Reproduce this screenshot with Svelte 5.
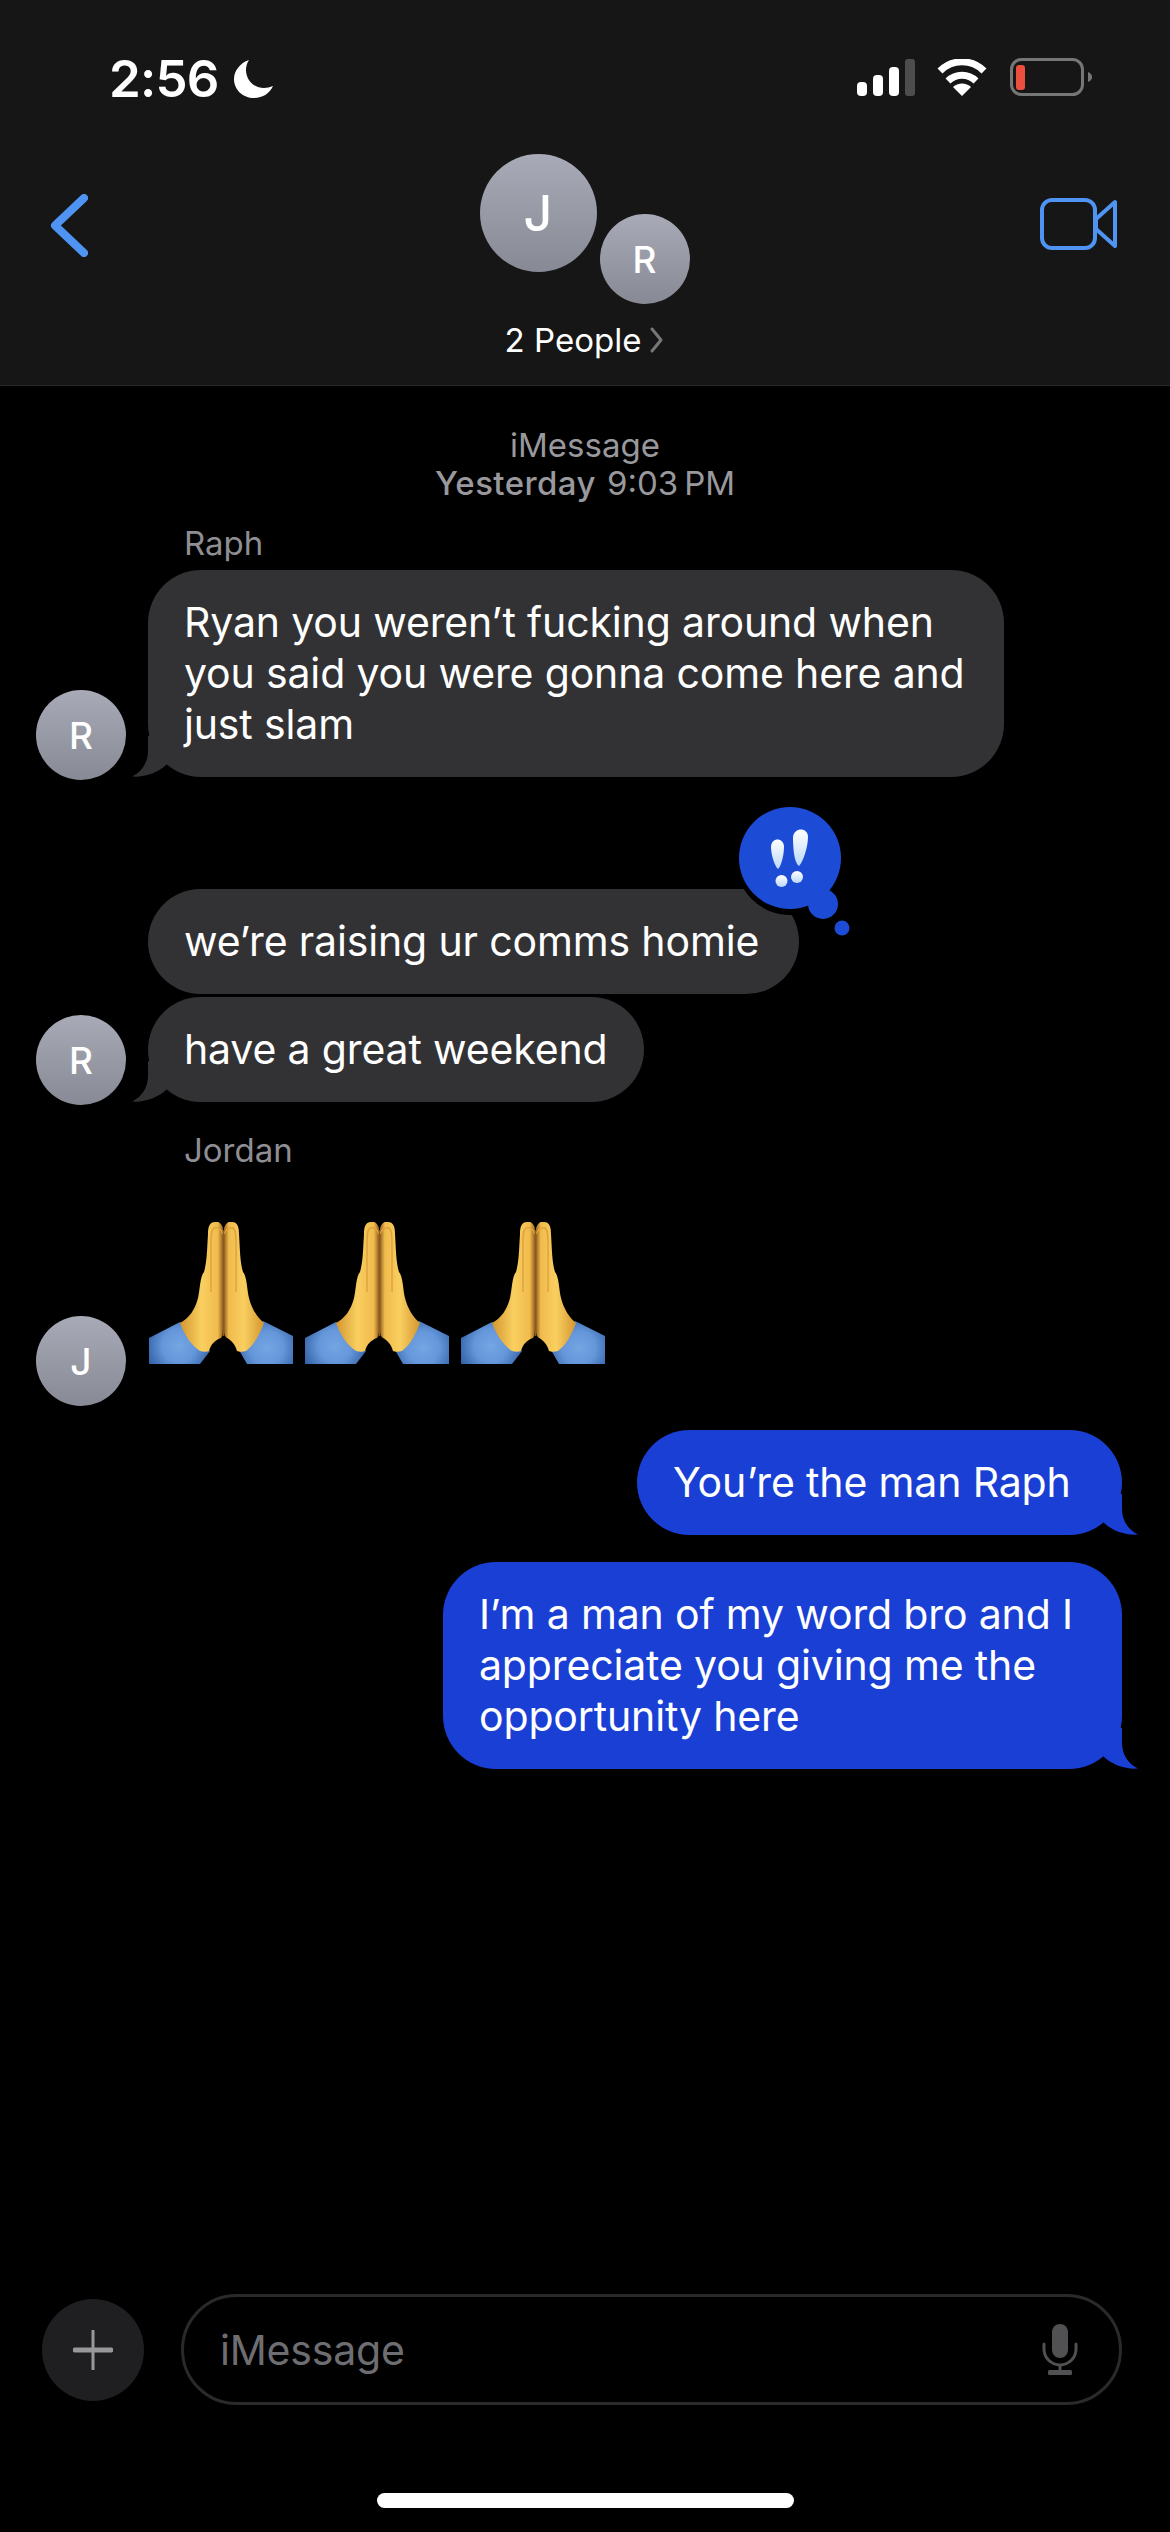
<script>
  const hands = [0, 1, 2];
</script>

{#snippet tail(flip)}
  <svg class="tail" class:flip viewBox="0 0 40 41" width="40" height="41" aria-hidden="true">
    <path d="M22 0 L22 15 C22 26 28 36 38 40.5 C26 41.5 12 37 3 28 L0 0 Z" />
  </svg>
{/snippet}

<div class="phone">
  <header class="top">
    <div class="status">
      <div class="clock">
        <span class="time">2:56</span>
        <svg class="moon" viewBox="0 0 40 40" width="40" height="40" aria-hidden="true">
          <path d="M15 1 C6 4 0 12 0 20 C0 31 9 39 20 39 C29 39 36 34 39 27 C36 28 33 29 30 29 C20 29 12 21 12 11 C12 7 13 4 15 1 Z" fill="#fff" />
        </svg>
      </div>
      <div class="indicators">
        <svg viewBox="0 0 58 37" width="58" height="37" aria-hidden="true">
          <rect x="0" y="23" width="10" height="14" rx="4" fill="#fff" />
          <rect x="16" y="16" width="10" height="21" rx="4" fill="#fff" />
          <rect x="32" y="8" width="10" height="29" rx="4" fill="#fff" />
          <rect x="48" y="0" width="10" height="37" rx="3" fill="#4d4d4d" />
        </svg>
        <svg class="wifi" viewBox="0 0 50 37" width="50" height="37" aria-hidden="true">
          <path d="M25 37 L16 28 A13 13 0 0 1 34 28 Z" fill="#fff" />
          <path d="M11 22 A20 20 0 0 1 39 22" fill="none" stroke="#fff" stroke-width="7" />
          <path d="M3 12 A31 31 0 0 1 47 12" fill="none" stroke="#fff" stroke-width="7" />
        </svg>
        <svg class="battery" viewBox="0 0 82 38" width="82" height="38" aria-hidden="true">
          <rect x="1.5" y="1.5" width="71" height="35" rx="10" fill="none" stroke="#767676" stroke-width="3" />
          <rect x="6" y="7" width="9" height="25" rx="3" fill="#ec4f3e" />
          <path d="M78 14 C81 15 82 17 82 19 C82 21 81 23 78 24 Z" fill="#767676" />
        </svg>
      </div>
    </div>
    <nav class="nav">
      <svg class="back" viewBox="0 0 38 63" width="38" height="63" aria-hidden="true">
        <path d="M34 4 L5 31.5 L34 59" fill="none" stroke="#4f94f2" stroke-width="8" stroke-linecap="round" stroke-linejoin="round" />
      </svg>
      <div class="group">
        <div class="avatars">
          <div class="avatar big">J</div>
          <div class="avatar mid">R</div>
        </div>
        <div class="people">2 People
          <svg viewBox="0 0 15 30" width="15" height="30" aria-hidden="true">
            <path d="M3 4 L12 15 L3 26" fill="none" stroke="#77777a" stroke-width="3" stroke-linecap="round" stroke-linejoin="round" />
          </svg>
        </div>
      </div>
      <svg class="video" viewBox="0 0 78 52" width="78" height="52" aria-hidden="true">
        <rect x="2" y="2" width="53" height="48" rx="10" fill="none" stroke="#4f94f2" stroke-width="4" />
        <path d="M56 21 L75 4 L75 48 L56 31 Z" fill="none" stroke="#4f94f2" stroke-width="4" stroke-linejoin="round" />
      </svg>
    </nav>
  </header>

  <main class="thread">
    <div class="stamp">
      <div>iMessage</div>
      <div><b>Yesterday</b> 9:03&#8201;PM</div>
    </div>

    <div class="name">Raph</div>
    <div class="row">
      <div class="avatar small">R</div>
      <div class="bubble in wide">Ryan you weren’t fucking around when you said you were gonna come here and just slam{@render tail(true)}</div>
    </div>

    <div class="row second">
      <div class="spacer"></div>
      <div class="bubble in homie">we’re raising ur comms homie
        <svg class="reaction" viewBox="0 0 120 130" width="120" height="130" aria-hidden="true">
          <defs>
            <linearGradient id="bang" x1="0" y1="0" x2="0" y2="1">
              <stop offset="0" stop-color="#fff" />
              <stop offset="1" stop-color="#bcd8f8" />
            </linearGradient>
          </defs>
          <circle cx="54" cy="54" r="54" fill="#000" />
          <circle cx="54" cy="51" r="51" fill="#1c4cd6" />
          <circle cx="87" cy="97" r="15" fill="#1c4cd6" />
          <circle cx="106" cy="121" r="7.5" fill="#1c4cd6" />
          <path d="M35 40 C35 30 48 30 48 40 C48 48 45 60 42 62 C39 60 35 48 35 40 Z" fill="url(#bang)" />
          <path d="M57 30 C58 20 72 20 72 30 C72 40 67 55 63 59 C58 56 57 40 57 30 Z" fill="url(#bang)" />
          <circle cx="45.500" cy="74" r="6" fill="url(#bang)" />
          <circle cx="61" cy="70" r="6" fill="url(#bang)" />
        </svg>
      </div>
    </div>
    <div class="row third">
      <div class="avatar small">R</div>
      <div class="bubble in">have a great weekend{@render tail(true)}</div>
    </div>

    <div class="name jordan">Jordan</div>
    <div class="row">
      <div class="avatar small">J</div>
      <div class="emoji">
        {#each hands as i}
          <svg viewBox="0 0 144 142" width="144" height="142" role="img" aria-label="folded hands">
            <defs>
              <radialGradient id={`slA${i}`} gradientUnits="userSpaceOnUse" cx="30" cy="124" r="42">
                <stop offset="0" stop-color="#74a6e4" />
                <stop offset="0.4" stop-color="#6496da" />
                <stop offset="0.75" stop-color="#3a69ad" />
                <stop offset="1" stop-color="#1a3d80" />
              </radialGradient>
              <radialGradient id={`slB${i}`} gradientUnits="userSpaceOnUse" cx="118" cy="126" r="42">
                <stop offset="0" stop-color="#74a6e4" />
                <stop offset="0.4" stop-color="#6496da" />
                <stop offset="0.75" stop-color="#3a69ad" />
                <stop offset="1" stop-color="#1a3d80" />
              </radialGradient>
              <linearGradient id={`skA${i}`} x1="0" y1="0" x2="1" y2="0">
                <stop offset="0" stop-color="#d3962f" />
                <stop offset="0.5" stop-color="#f9cf60" />
                <stop offset="0.88" stop-color="#f0bb4c" />
                <stop offset="1" stop-color="#94601f" />
              </linearGradient>
              <linearGradient id={`skB${i}`} x1="1" y1="0" x2="0" y2="0">
                <stop offset="0" stop-color="#d3962f" />
                <stop offset="0.5" stop-color="#f9cf60" />
                <stop offset="0.88" stop-color="#f0bb4c" />
                <stop offset="1" stop-color="#94601f" />
              </linearGradient>
            </defs>
            <path d="M0 116 L31 100 L61 129 L51 142 L0 142 Z" fill={`url(#slA${i})`} />
            <path d="M144 114 L114 99 L86 121 L98 142 L144 142 Z" fill={`url(#slB${i})`} />
            <path d="M66 0 C60 0 59 6 59 12 C58 28 58 40 55 50 C51 54 51 68 49 76 C46 88 40 96 31 101 C35 112 42 123 51 129 C54 130 58 130 60 129 C62 122 66 118 72 116 C74 114 74 110 74 106 L74 6 C72 0 68 -1 66 0 Z" fill={`url(#skA${i})`} />
            <path d="M83 0 C89 0 90 6 90 12 C91 28 91 40 94 50 C98 54 98 68 100 76 C103 88 109 96 115 101 C111 112 105 123 97 129 C94 130 90 130 88 129 C86 122 82 118 78 116 C75 114 75 110 75 106 L75 6 C77 0 81 -1 83 0 Z" fill={`url(#skB${i})`} />
            <path d="M74 12 C72 6 68 5 65 6 C62 8 62 14 62 22 L62 70" fill="none" stroke="#e0a43f" stroke-width="1.5" />
            <path d="M75 12 C77 6 81 5 84 6 C87 8 87 14 87 22 L87 70" fill="none" stroke="#e0a43f" stroke-width="1.5" />
            <path d="M74.500 8 L74.500 114" fill="none" stroke="#8a5a22" stroke-width="1.5" />
          </svg>
        {/each}
      </div>
    </div>

    <div class="sent">
      <div class="bubble out first">You’re the man Raph{@render tail(false)}</div>
      <div class="bubble out last">I’m a man of my word bro and I appreciate you giving me the opportunity here{@render tail(false)}</div>
    </div>
  </main>

  <footer class="composer">
    <div class="plus">
      <svg viewBox="0 0 40 40" width="40" height="40" aria-hidden="true">
        <path d="M20 1 L20 39" stroke="#98989b" stroke-width="3" stroke-linecap="round" />
        <path d="M2 20 L38 20" stroke="#98989b" stroke-width="5" stroke-linecap="round" />
      </svg>
    </div>
    <div class="field">
      <span>iMessage</span>
      <svg viewBox="0 0 36 51" width="36" height="51" aria-hidden="true">
        <rect x="10" y="0" width="16" height="34" rx="8" fill="#515153" />
        <path d="M2 20 L2 25 A16 16 0 0 0 34 25 L34 20" fill="none" stroke="#515153" stroke-width="3" stroke-linecap="round" />
        <path d="M18 41 L18 47" stroke="#515153" stroke-width="3" />
        <rect x="6" y="46" width="24" height="5" rx="1.500" fill="#515153" />
      </svg>
    </div>
  </footer>
  <div class="homebar"></div>
</div>

<style>
  :global(body) {
    margin: 0;
    background: #000;
  }
  .phone {
    width: 1170px;
    height: 2532px;
    display: flex;
    flex-direction: column;
    background: #000;
    color: #fff;
    font-family: Inter, "Liberation Sans", sans-serif;
    overflow: hidden;
  }
  .top {
    height: 385px;
    background: #161616;
    border-bottom: 1px solid #2a2a2a;
    flex: none;
  }
  .status {
    display: flex;
    justify-content: space-between;
    align-items: flex-start;
    height: 154px;
    padding: 0 78px 0 109px;
    box-sizing: border-box;
  }
  .clock {
    display: flex;
    align-items: center;
    gap: 15px;
    margin-top: 59px;
    height: 39px;
  }
  .time {
    font-size: 51px;
    font-weight: 600;
    line-height: 39px;
    letter-spacing: -0.8px;
  }
  .indicators {
    display: flex;
    align-items: flex-start;
    margin-top: 58px;
    padding-top: 1px;
  }
  .wifi {
    margin-left: 22px;
  }
  .battery {
    margin-left: 23px;
    margin-top: -1px;
  }
  .nav {
    display: grid;
    grid-template-columns: 1fr auto 1fr;
    align-items: flex-start;
    padding: 0 52px 0 50px;
  }
  .back {
    margin-top: 40px;
  }
  .video {
    margin-top: 44px;
    justify-self: end;
  }
  .group {
    display: flex;
    flex-direction: column;
    align-items: center;
    margin-left: 1px;
  }
  .avatars {
    display: flex;
    align-items: flex-start;
    gap: 3px;
  }
  .avatar {
    flex: none;
    display: flex;
    align-items: center;
    justify-content: center;
    border-radius: 50%;
    background: linear-gradient(#a8abb7, #878a94);
    color: #fff;
    font-weight: 500;
  }
  .big {
    width: 117px;
    height: 118px;
    font-size: 50px;
  }
  .mid {
    width: 90px;
    height: 90px;
    margin-top: 60px;
    font-size: 37px;
  }
  .small {
    width: 90px;
    height: 90px;
    font-size: 37px;
    margin-bottom: -3px;
  }
  .people {
    display: flex;
    align-items: center;
    gap: 8px;
    margin-top: 16px;
    font-size: 33px;
    line-height: 40px;
    color: #fff;
  }
  .thread {
    flex: 1;
    display: flex;
    flex-direction: column;
    align-items: flex-start;
    padding: 40px 0 0 36px;
    box-sizing: border-box;
  }
  .stamp {
    align-self: stretch;
    margin-left: -36px;
    text-align: center;
    font-size: 33px;
    line-height: 38px;
    color: #98989d;
  }
  .stamp b {
    font-weight: 500;
    letter-spacing: 0.4px;
    margin-right: 2px;
  }
  .name {
    margin: 22px 0 8px 148px;
    font-size: 33px;
    line-height: 38px;
    color: #8e8e93;
  }
  .jordan {
    margin: 29px 0 53px 148px;
  }
  .row {
    display: flex;
    align-items: flex-end;
    gap: 22px;
  }
  .second {
    margin-top: 112px;
  }
  .third {
    margin-top: 3px;
  }
  .spacer {
    width: 90px;
  }
  .bubble {
    position: relative;
    padding: 27px 36px;
    border-radius: 53px;
    font-size: 41px;
    letter-spacing: -0.15px;
    line-height: 51px;
    white-space: nowrap;
    box-sizing: border-box;
  }
  .in {
    background: #323234;
    fill: #323234;
  }
  .wide {
    width: 856px;
    white-space: normal;
  }
  .homie {
    width: 651px;
  }
  .out {
    background: #1a3fd4;
    fill: #1a3fd4;
  }
  .first {
    width: 485px;
  }
  .last {
    width: 679px;
    white-space: normal;
    margin-top: 27px;
  }
  .tail {
    position: absolute;
    right: -18px;
    bottom: 0;
  }
  .tail.flip {
    right: auto;
    left: -18px;
    transform: scaleX(-1);
  }
  .reaction {
    position: absolute;
    right: -57px;
    top: -82px;
  }
  .emoji {
    display: flex;
    gap: 12px;
    margin: 0 0 39px 1px;
  }
  .emoji svg {
    display: block;
  }
  .sent {
    align-self: flex-end;
    display: flex;
    flex-direction: column;
    align-items: flex-end;
    margin: 27px 48px 0 0;
  }
  .composer {
    flex: none;
    display: flex;
    align-items: center;
    gap: 37px;
    padding: 0 48px 0 42px;
  }
  .plus {
    flex: none;
    display: flex;
    align-items: center;
    justify-content: center;
    width: 102px;
    height: 102px;
    border-radius: 50%;
    background: #1f1f21;
  }
  .field {
    flex: 1;
    height: 111px;
    display: flex;
    align-items: center;
    justify-content: space-between;
    padding: 0 41px 0 36px;
    border: 3px solid #2a2a2c;
    border-radius: 56px;
    box-sizing: border-box;
    font-size: 41px;
    letter-spacing: -0.2px;
    color: #6e6e72;
  }
  .homebar {
    flex: none;
    width: 417px;
    height: 15px;
    margin: 88px auto 24px;
    border-radius: 8px;
    background: #fff;
  }
</style>
